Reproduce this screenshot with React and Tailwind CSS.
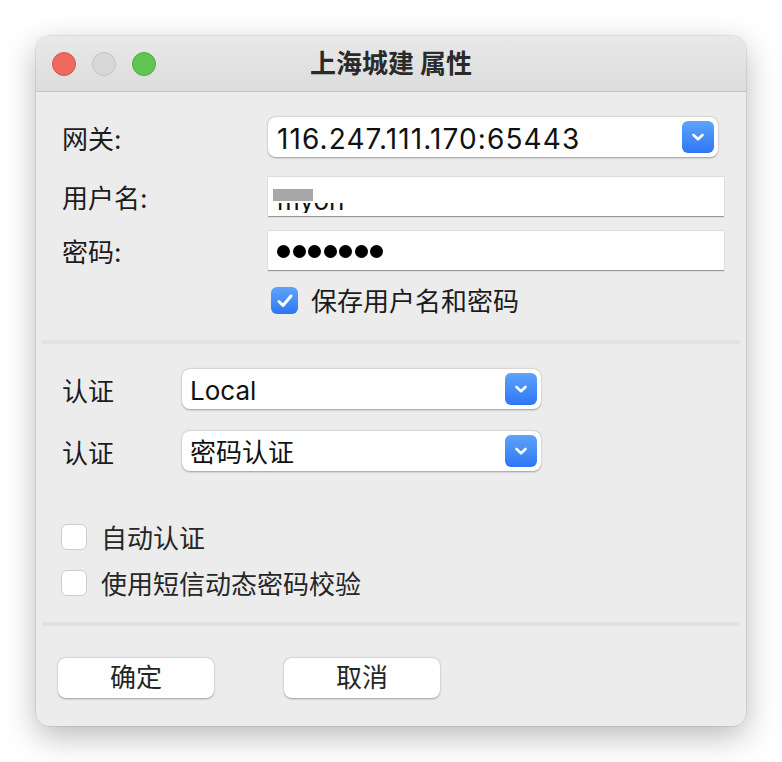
import React from "react";

const font = { fontFamily: 'Inter, "Noto Sans CJK SC", sans-serif' };

function Chevron() {
  return (
    <div className="w-[32px] h-[32px] rounded-[6px] bg-gradient-to-b from-[#5ea3fb] to-[#2f76f5] flex items-center justify-center shrink-0">
      <svg width="14" height="10" viewBox="0 0 14 10" fill="none">
        <path d="M2.5 3 L7 7.2 L11.5 3" stroke="white" strokeWidth="2.6" strokeLinecap="round" strokeLinejoin="round" />
      </svg>
    </div>
  );
}

function Select({ value, className = "", textClass = "text-[26px]" }) {
  return (
    <div className={"h-[40px] bg-white rounded-[8px] shadow-[0_0.5px_2px_rgba(0,0,0,0.35)] flex items-center pl-[8px] pr-[4px] " + className}>
      <span className={"flex-1 text-[#111] leading-none pt-[4px] " + textClass}>{value}</span>
      <Chevron />
    </div>
  );
}

function CheckBox({ checked }) {
  if (checked) {
    return (
      <div className="w-[27px] h-[27px] rounded-[6px] bg-gradient-to-b from-[#5ea3fb] to-[#2f76f5] flex items-center justify-center shrink-0">
        <svg width="18" height="16" viewBox="0 0 18 16" fill="none">
          <path d="M3 8.5 L7 12.5 L15 3" stroke="white" strokeWidth="3" strokeLinecap="round" strokeLinejoin="round" />
        </svg>
      </div>
    );
  }
  return <div className="w-[26px] h-[26px] rounded-[6px] bg-white border border-[#cdcdcd] shrink-0" />;
}

function TextField({ children }) {
  return (
    <div className="flex-1 h-[40px] bg-white border-t border-[#dcdcdc] shadow-[0_1px_1px_rgba(0,0,0,0.35)] flex items-center pl-[9px]">
      {children}
    </div>
  );
}

function Label({ w, children }) {
  return <span className={"text-[26px] leading-none pt-[5px] " + w}>{children}</span>;
}

export default function App() {
  return (
    <div className="w-[782px] h-[762px] bg-white pt-[36px] pl-[36px]" style={font}>
      <div className="w-[710px] h-[690px] rounded-[13px] bg-[#ececec] overflow-hidden shadow-[0_10px_32px_rgba(0,0,0,0.28),0_0_0_0.5px_rgba(0,0,0,0.15)] flex flex-col">
        {/* title bar */}
        <div className="h-[56px] shrink-0 bg-gradient-to-b from-[#e9e9e9] to-[#dcdcdc] border-b border-[#c4c4c4] flex items-center relative">
          <div className="flex items-center gap-[16px] pl-[16px]">
            <div className="w-[24px] h-[24px] rounded-full bg-[#ee6a5f] border border-[#d5574c]" />
            <div className="w-[24px] h-[24px] rounded-full bg-[#d8d8d8] border border-[#c3c3c3]" />
            <div className="w-[24px] h-[24px] rounded-full bg-[#61c554] border border-[#4fab43]" />
          </div>
          <div className="absolute inset-0 flex items-center justify-center text-[26px] font-bold text-[#2a2a2a] pointer-events-none">
            上海城建 属性
          </div>
        </div>

        {/* account section */}
        <div className="pt-[25px] pl-[26px] pr-[22px] text-[#1c1c1c]">
          <div className="flex items-center h-[40px]">
            <Label w="w-[206px]">网关:</Label>
            <Select value="116.247.111.170:65443" className="flex-1 mr-[6px]" textClass="text-[28px] pl-[1px] tracking-[1.1px]" />
          </div>
          <div className="flex items-center h-[40px] mt-[19px]">
            <Label w="w-[206px]">用户名:</Label>
            <TextField>
              <div className="flex flex-col pt-[8px]">
                <div className="w-[40px] h-[12px] bg-[#a7a7a7] ml-[-4px]" />
                <div className="h-[10px] mt-[2px] overflow-hidden ml-[-6px] bg-white w-[80px]">
                  <div className="text-[26px] leading-none mt-[-15px] pl-[6px] text-[#111]">myon</div>
                </div>
              </div>
            </TextField>
          </div>
          <div className="flex items-center h-[40px] mt-[14px]">
            <Label w="w-[206px]">密码:</Label>
            <TextField>
              <div className="flex items-center gap-[2.5px] pt-[1px]">
                {[0, 1, 2, 3, 4, 5, 6].map((i) => (
                  <div key={i} className="w-[13px] h-[13px] rounded-full bg-black" />
                ))}
              </div>
            </TextField>
          </div>
          <div className="flex items-center h-[27px] mt-[17px] pl-[209px]">
            <CheckBox checked />
            <span className="ml-[13px] text-[26px] leading-none pt-[3px]">保存用户名和密码</span>
          </div>
        </div>

        <div className="mt-[26px] mx-[6px] h-[4px] bg-[#e2e2e2] shrink-0" />

        {/* auth section */}
        <div className="pt-[25px] pl-[26px] text-[#1c1c1c]">
          <div className="flex items-center h-[40px]">
            <Label w="w-[120px]">认证</Label>
            <Select value="Local" className="w-[359px]" />
          </div>
          <div className="flex items-center h-[40px] mt-[22px]">
            <Label w="w-[120px]">认证</Label>
            <Select value="密码认证" className="w-[359px]" />
          </div>
        </div>

        <div className="pt-[53px] pl-[25px] text-[#262626]">
          <div className="flex items-center h-[26px]">
            <CheckBox />
            <span className="ml-[14px] text-[26px] leading-none pt-[3px]">自动认证</span>
          </div>
          <div className="flex items-center h-[26px] mt-[20px]">
            <CheckBox />
            <span className="ml-[14px] text-[26px] leading-none pt-[3px]">使用短信动态密码校验</span>
          </div>
        </div>

        <div className="mt-[26px] mx-[6px] h-[4px] bg-[#e2e2e2] shrink-0" />

        <div className="pt-[32px] pl-[22px] flex gap-[70px]">
          <button className="w-[156px] h-[40px] bg-white rounded-[8px] shadow-[0_0.5px_2px_rgba(0,0,0,0.35)] text-[26px] leading-none text-[#262626]">
            确定
          </button>
          <button className="w-[156px] h-[40px] bg-white rounded-[8px] shadow-[0_0.5px_2px_rgba(0,0,0,0.35)] text-[26px] leading-none text-[#262626]">
            取消
          </button>
        </div>
      </div>
    </div>
  );
}
